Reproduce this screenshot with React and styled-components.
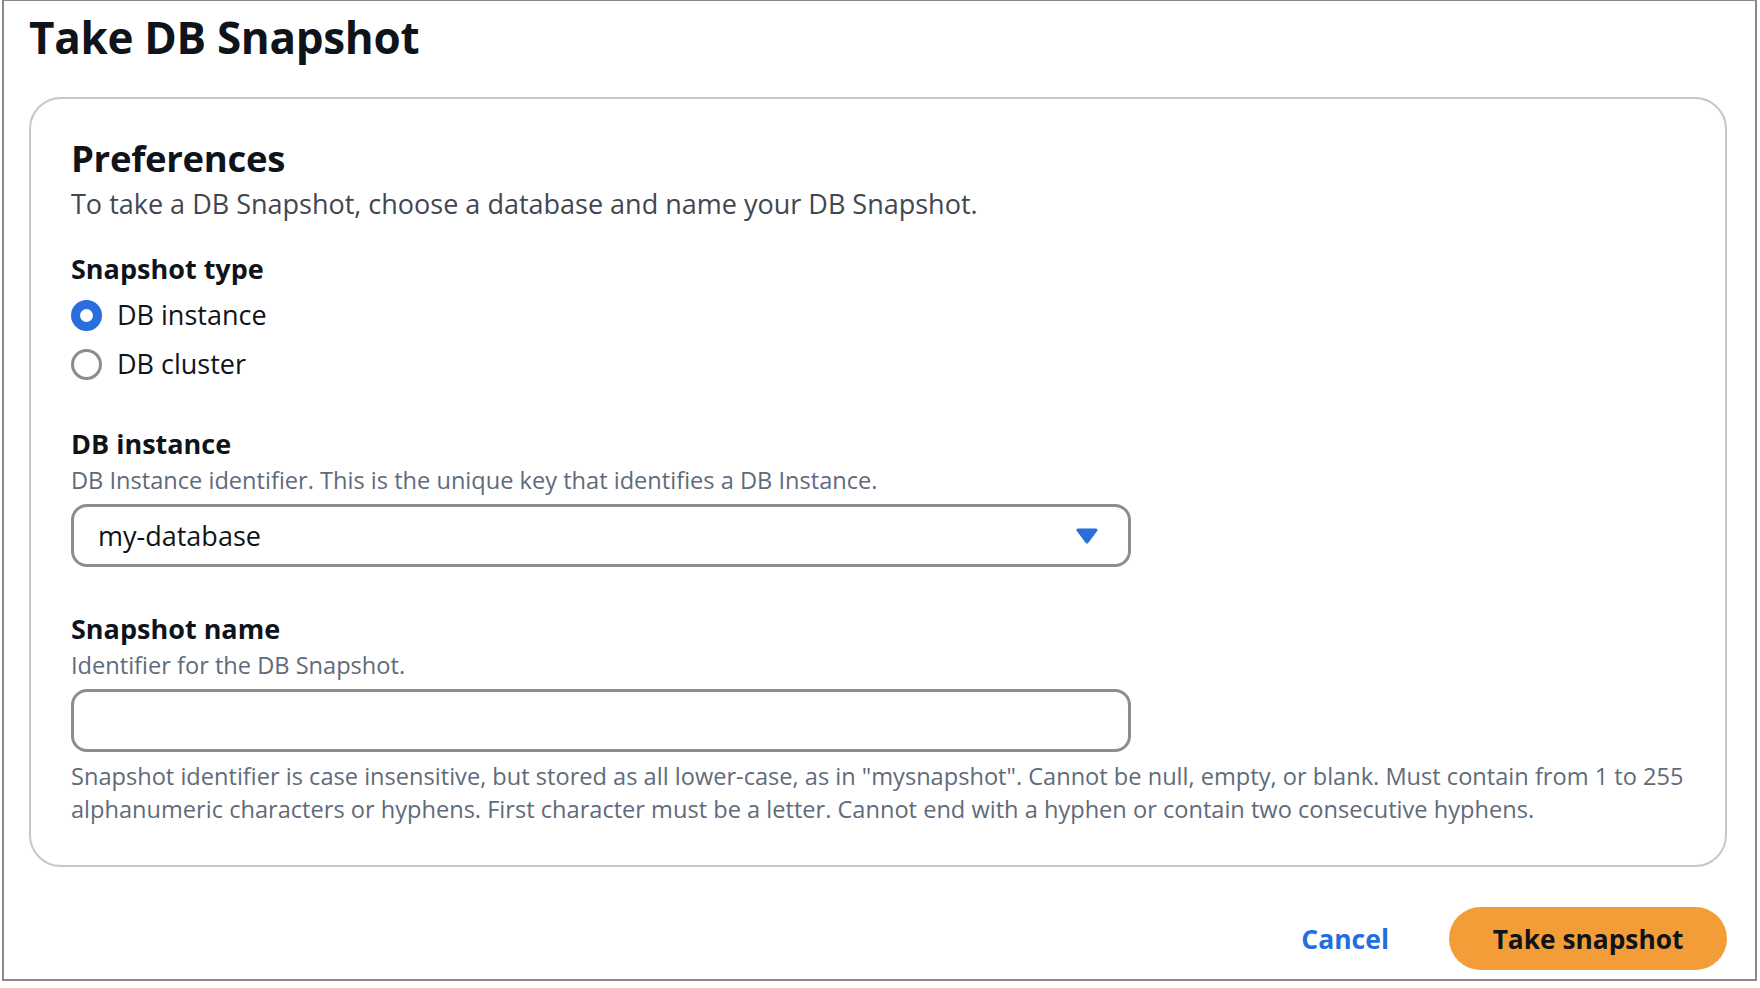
import React, { useState } from "react";
import styled, { createGlobalStyle } from "styled-components";

const Global = createGlobalStyle`
  html, body { margin: 0; padding: 0; background: #ffffff; }
  body { font-family: "Open Sans", "Noto Sans", Arial, sans-serif; color: #0f141a; }
  * { box-sizing: border-box; }
`;

const Frame = styled.div`
  margin-left: 2px;
  width: 1755px;
  height: 981px;
  border: 2px solid #8a8a8a;
  border-top-width: 1px;
  display: flex;
  flex-direction: column;
  padding: 0 28px 0 25px;
`;

const Title = styled.h1`
  margin: 0;
  padding-top: 6px;
  font-size: 44px;
  line-height: 60px;
  font-weight: 700;
  letter-spacing: -0.3px;
  color: #0f141a;
`;

const Panel = styled.section`
  margin-top: 30px;
  border: 2px solid #c6c6cd;
  border-radius: 32px;
  padding: 34px 40px 39px 40px;
  display: flex;
  flex-direction: column;
`;

const PanelTitle = styled.h2`
  margin: 0;
  font-size: 36.5px;
  line-height: 50px;
  font-weight: 700;
  letter-spacing: -0.3px;
`;

const PanelDesc = styled.p`
  margin: 2px 0 0 0;
  font-size: 27px;
  line-height: 38px;
  color: #424650;
`;

const Field = styled.div`
  display: flex;
  flex-direction: column;
  margin-top: ${(p) => p.$gap || 0}px;
`;

const Label = styled.div`
  font-size: 27px;
  line-height: 38px;
  font-weight: 700;
`;

const Hint = styled.div`
  font-size: 23.6px;
  line-height: 34px;
  color: #5f6b7a;
  margin-bottom: ${(p) => p.$mb || 0}px;
`;

const RadioList = styled.div`
  display: flex;
  flex-direction: column;
  gap: 17px;
  margin-top: 11px;
`;

const RadioRow = styled.label`
  display: flex;
  align-items: center;
  gap: 15px;
  font-size: 27px;
  line-height: 32px;
  cursor: pointer;
`;

const RadioDot = styled.span`
  width: 31px;
  height: 31px;
  border-radius: 50%;
  flex: none;
  background: #ffffff;
  border: ${(p) => (p.$checked ? "9px solid #2a6edb" : "3px solid #8c8c94")};
`;

const SelectBox = styled.div`
  width: 1060px;
  height: 63px;
  border: 3px solid #8c8c94;
  border-radius: 16px;
  display: flex;
  align-items: center;
  justify-content: space-between;
  padding: 0 30px 0 24px;
  font-size: 27px;
  color: #0f141a;
`;

const Input = styled.input`
  width: 1060px;
  height: 63px;
  border: 3px solid #8c8c94;
  border-radius: 16px;
  padding: 0 24px;
  font-size: 27px;
  font-family: inherit;
  outline: none;
`;

const Constraint = styled.p`
  margin: 8px 0 0 0;
  font-size: 23.6px;
  line-height: 33px;
  color: #5f6b7a;
  max-width: 1650px;
`;

const Footer = styled.div`
  display: flex;
  justify-content: flex-end;
  align-items: center;
  gap: 60px;
  margin-top: 40px;
`;

const LinkButton = styled.button`
  background: none;
  border: none;
  padding: 0;
  color: #1f6fde;
  font-family: inherit;
  font-size: 26.5px;
  font-weight: 700;
  cursor: pointer;
`;

const PrimaryButton = styled.button`
  height: 63px;
  width: 278px;
  border: none;
  border-radius: 32px;
  background: #f29d38;
  color: #0f141a;
  font-family: inherit;
  font-size: 26.3px;
  font-weight: 700;
  cursor: pointer;
`;

export default function App() {
  const [type, setType] = useState("instance");
  return (
    <>
      <Global />
      <Frame>
        <Title>Take DB Snapshot</Title>
        <Panel>
          <PanelTitle>Preferences</PanelTitle>
          <PanelDesc>To take a DB Snapshot, choose a database and name your DB Snapshot.</PanelDesc>
          <Field $gap={27}>
            <Label>Snapshot type</Label>
            <RadioList>
              <RadioRow onClick={() => setType("instance")}>
                <RadioDot $checked={type === "instance"} />
                DB instance
              </RadioRow>
              <RadioRow onClick={() => setType("cluster")}>
                <RadioDot $checked={type === "cluster"} />
                DB cluster
              </RadioRow>
            </RadioList>
          </Field>
          <Field $gap={45}>
            <Label>DB instance</Label>
            <Hint $mb={7}>DB Instance identifier. This is the unique key that identifies a DB Instance.</Hint>
            <SelectBox>
              <span>my-database</span>
              <svg width="22" height="18" viewBox="0 0 22 18">
                <path d="M2 3 L20 3 L11 15 Z" fill="#2a6edb" stroke="#2a6edb" strokeWidth="3" strokeLinejoin="round" />
              </svg>
            </SelectBox>
          </Field>
          <Field $gap={43}>
            <Label>Snapshot name</Label>
            <Hint $mb={7}>Identifier for the DB Snapshot.</Hint>
            <Input type="text" />
            <Constraint>
              Snapshot identifier is case insensitive, but stored as all lower-case, as in "mysnapshot". Cannot be null, empty, or blank. Must contain from 1 to 255 alphanumeric characters or hyphens. First character must be a letter. Cannot end with a hyphen or contain two consecutive hyphens.
            </Constraint>
          </Field>
        </Panel>
        <Footer>
          <LinkButton>Cancel</LinkButton>
          <PrimaryButton>Take snapshot</PrimaryButton>
        </Footer>
      </Frame>
    </>
  );
}
